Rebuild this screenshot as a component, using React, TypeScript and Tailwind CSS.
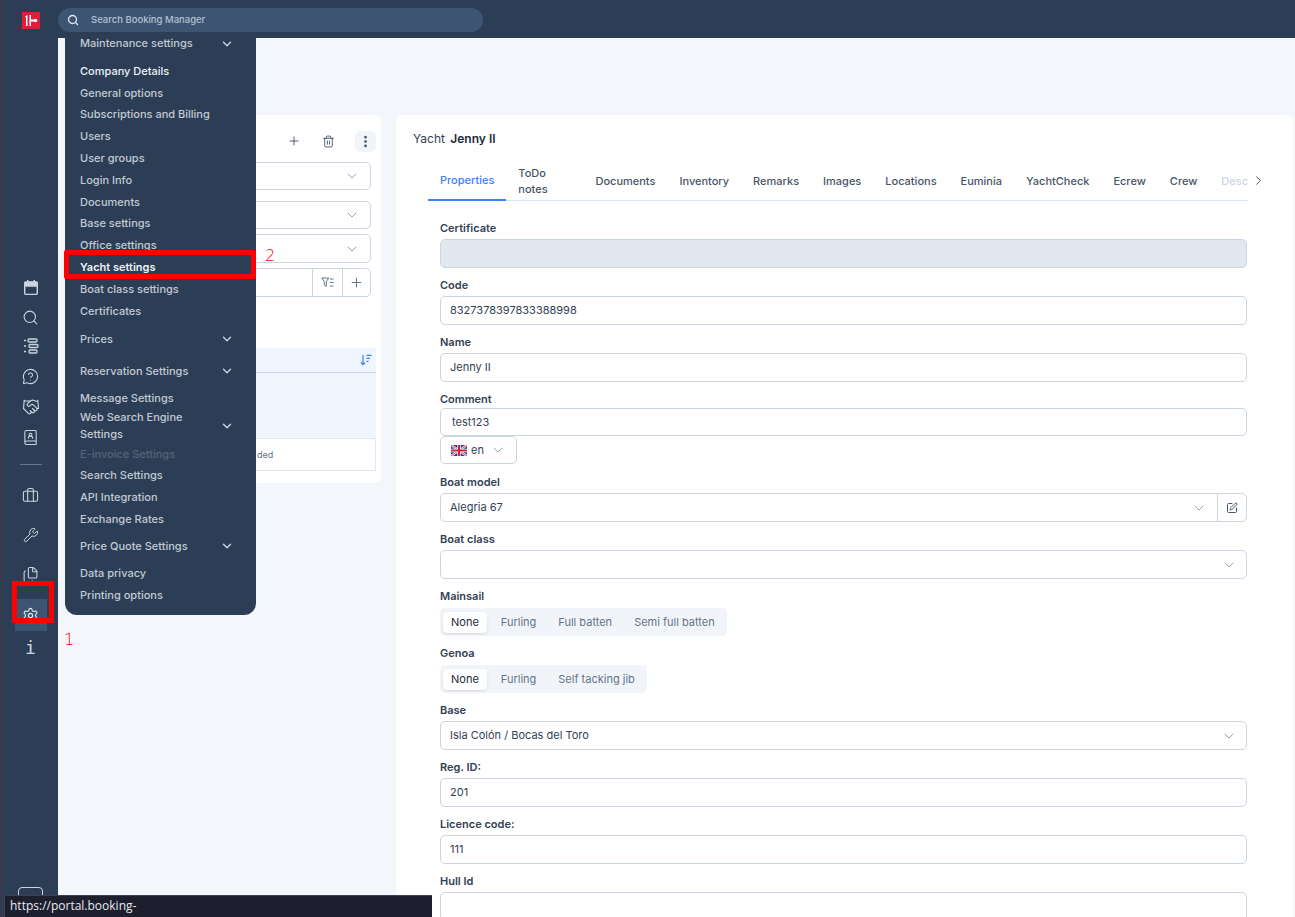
import React from "react";
import { Search, ChevronDown, ChevronRight, Plus, Trash2, EllipsisVertical, MessageCircleQuestion, Handshake, BookUser, Briefcase, Wrench, Files, Settings, SquarePen } from "lucide-react";

const F = "[font-family:Inter,'Liberation_Sans',sans-serif]";

function Chevron({ className = "" }: { className?: string }) {
  return <ChevronDown size={16} strokeWidth={1.5} className={`text-[#94a3b8] ${className}`} />;
}

function Label({ children, tight }: { children: React.ReactNode; tight?: boolean }) {
  return <div className={`h-4 text-[11px] leading-4 font-semibold text-[#334155] ${tight ? "mb-[1px]" : "mb-[3px]"}`}>{children}</div>;
}

function Input({ value, disabled, select, h = "h-[29px]", px = "px-[9px]" }: { value?: string; disabled?: boolean; select?: boolean; h?: string; px?: string }) {
  return (
    <div className={`${h} ${px} flex items-center justify-between rounded-[5px] border border-[#cbd5e1] text-[11px] text-[#334155] ${disabled ? "bg-[#e2e8f0]" : "bg-white"}`}>
      <span>{value}</span>
      {select && <Chevron />}
    </div>
  );
}

function Field({ label, value, disabled, select }: { label: string; value?: string; disabled?: boolean; select?: boolean }) {
  return (
    <div className="mb-[9px]">
      <Label>{label}</Label>
      <Input value={value} disabled={disabled} select={select} />
    </div>
  );
}

function Segments({ label, items }: { label: string; items: string[] }) {
  return (
    <div className="mb-[9px]">
      <Label>{label}</Label>
      <div className="flex w-fit h-[28px] mt-[4px] items-center rounded-[5px] bg-[#f1f5f9] px-[3px]">
        {items.map((t, i) => (
          <span key={t} className={`h-[21px] px-[8px] mr-[6px] last:mr-[1px] flex items-center rounded-[4px] text-[11px] ${i === 0 ? "bg-white text-[#1e293b] shadow-sm" : "text-[#64748b]"}`}>{t}</span>
        ))}
      </div>
    </div>
  );
}

function CalendarIcon() {
  return (
    <svg width="16" height="17" viewBox="0 0 16 17" fill="none" stroke="#cbd5e1" strokeWidth="1.4">
      <rect x="1.7" y="3" width="12.6" height="12.4" rx="1.5" />
      <path d="M2 3.5h12V7H2z" fill="#cbd5e1" />
      <path d="M4.7 1v2.5M11.3 1v2.5" />
    </svg>
  );
}

function ListIcon() {
  return (
    <svg width="16" height="16" viewBox="0 0 16 16" fill="none" stroke="#cbd5e1" strokeWidth="1.3">
      <path d="M1 2.5h2M1 8h2M1 13.5h2" strokeWidth="1.6" />
      <rect x="5" y="1" width="9" height="3" rx="1" />
      <rect x="6" y="6.5" width="9" height="3" rx="1" />
      <rect x="6" y="12" width="8" height="3" rx="1" />
    </svg>
  );
}

function Logo() {
  return (
    <svg width="18" height="17" viewBox="0 0 18 17">
      <rect width="18" height="17" fill="#e11d38" />
      <path d="M3 4.5 5.5 3v11H4V5.5zM7.5 3H9v11H7.5z" fill="#fff" />
      <path d="M9 7.5h3.5v2H9z" fill="#fff" />
      <circle cx="13.5" cy="8.5" r="1.8" fill="#fff" />
    </svg>
  );
}

function FilterIcon() {
  return (
    <svg width="13" height="11" viewBox="0 0 13 11" fill="none" stroke="#64748b" strokeWidth="1">
      <path d="M.7 1h7L5.3 4.5V9.5L3.3 8V4.5z" />
      <path d="M9 2h3.5M9 5.5h3.5M9 9h3.5" />
    </svg>
  );
}

function SortIcon() {
  return (
    <svg width="12" height="12" viewBox="0 0 12 12" fill="none" stroke="#3b82f6" strokeWidth="1.2">
      <path d="M3 1v9.5M1 8.5l2 2.2 2-2.2M6.5 1.3h5M6.5 4.3h3.5M6.5 7.3h2" />
    </svg>
  );
}

function UkFlag() {
  return (
    <svg width="16" height="11" viewBox="0 0 16 11">
      <rect width="16" height="11" fill="#27408b" />
      <path d="M0 0l16 11M16 0L0 11" stroke="#fff" strokeWidth="2.2" />
      <path d="M0 0l16 11M16 0L0 11" stroke="#d5213f" strokeWidth="0.8" />
      <path d="M8 0v11M0 5.5h16" stroke="#fff" strokeWidth="3.4" />
      <path d="M8 0v11M0 5.5h16" stroke="#d5213f" strokeWidth="2" />
    </svg>
  );
}

function Menu() {
  const Item = ({ t, h = "h-[21.8px]", cls = "text-[#c3c9d3]" }: { t: string; h?: string; cls?: string }) => (
    <div className={`${h} flex items-center text-[11px] font-medium ${cls}`}>{t}</div>
  );
  const Group = ({ t, h = "h-[31px]" }: { t: string; h?: string }) => (
    <div className={`${h} flex items-center justify-between pr-[22px] text-[11px] font-medium text-[#c3c9d3]`}>
      <span>{t}</span>
      <ChevronDown size={14} strokeWidth={2.4} className="text-[#cbd5e1] shrink-0" />
    </div>
  );
  return (
    <div className="absolute left-[65px] top-[32px] w-[191px] h-[583px] rounded-b-[12px] bg-[#2c3e56] pl-[15px] pt-[1px] z-20">
      <Group t="Maintenance settings" h="h-[21px]" />
      <div className="h-[6px]" />
      <Item t="Company Details" h="h-[22px]" cls="text-[#eef2f6]" />
      <Item t="General options" />
      <Item t="Subscriptions and Billing" />
      <Item t="Users" />
      <Item t="User groups" />
      <Item t="Login Info" />
      <Item t="Documents" />
      <Item t="Base settings" />
      <Item t="Office settings" />
      <Item t="Yacht settings" cls="text-[#eef2f6] font-semibold" />
      <Item t="Boat class settings" />
      <Item t="Certificates" />
      <div className="h-[1px]" />
      <Group t="Prices" h="h-[32px]" />
      <Group t="Reservation Settings" h="h-[32px]" />
      <Item t="Message Settings" h="h-[22px]" />
      <div className="h-[1px]" />
      <Group t="Web Search Engine Settings" h="h-[32px]" />
      <div className="h-[1px]" />
      <Item t="E-invoice Settings" h="h-[22px]" cls="text-[#556479]" />
      <Item t="Search Settings" />
      <Item t="API Integration" />
      <Item t="Exchange Rates" />
      <Group t="Price Quote Settings" h="h-[32px]" />
      <Item t="Data privacy" h="h-[22px]" />
      <Item t="Printing options" />
    </div>
  );
}

function Sidebar() {
  const cls = "text-[#cbd5e1]";
  return (
    <aside className="w-[55px] shrink-0 bg-[#2c3e56] flex flex-col items-center pt-[12px] relative">
      <Logo />
      <div className="mt-[243px] flex flex-col items-center w-full">
        <div className="h-[30px] flex items-center"><CalendarIcon /></div>
        <div className="h-[30px] flex items-center"><Search size={17} strokeWidth={1.5} className={cls} /></div>
        <div className="h-[28px] flex items-center"><ListIcon /></div>
        <div className="h-[32px] flex items-center"><MessageCircleQuestion size={17} strokeWidth={1.5} className={cls} /></div>
        <div className="h-[29px] flex items-center"><Handshake size={18} strokeWidth={1.5} className={cls} /></div>
        <div className="h-[32px] flex items-center"><BookUser size={17} strokeWidth={1.5} className={cls} /></div>
        <div className="w-[22px] h-px bg-[#64748b] mt-[11px] mb-[11px]" />
        <div className="h-[38px] flex items-center"><Briefcase size={17} strokeWidth={1.5} className={cls} /></div>
        <div className="h-[42px] flex items-center"><Wrench size={16} strokeWidth={1.5} className={cls} /></div>
        <div className="h-[37px] flex items-center"><Files size={17} strokeWidth={1.5} className={cls} /></div>
        <div className="w-[32px] h-[32px] mt-[6px] flex items-center justify-center bg-[#3d5473]"><Settings size={17} strokeWidth={1.6} className="text-[#e2e8f0]" /></div>
        <div className="h-[32px] flex items-center text-[18px] [font-family:'DejaVu_Sans_Mono',monospace] text-[#cbd5e1]">i</div>
      </div>
      <div className="absolute left-[15px] top-[887px] w-[25px] h-[30px] rounded-[4px] border border-[#cbd5e1]" />
    </aside>
  );
}

function LeftCard() {
  const Box = ({ h, mb, chev }: { h: string; mb: string; chev?: boolean }) => (
    <div className={`${h} ${mb} rounded-[5px] border border-[#cbd5e1] bg-white flex items-center justify-end pr-[10px]`}>{chev && <Chevron />}</div>
  );
  return (
    <div className="w-[311px] h-[368px] bg-white rounded-[6px] px-[5px] pt-[14px] shrink-0">
      <div className="h-[24px] flex items-center justify-end text-[#334155] mb-[9px] mr-0">
        <Plus size={14} strokeWidth={1.4} className="mr-[21px]" />
        <Trash2 size={13} strokeWidth={1.5} className="mr-[20px]" />
        <div className="w-[21px] h-[21px] rounded-[5px] bg-[#f1f5f9] flex items-center justify-center"><EllipsisVertical size={15} strokeWidth={2.4} className="text-[#475569]" /></div>
      </div>
      <div className="pr-[5px]">
        <Box h="h-[28px]" mb="mb-[11px]" chev />
        <Box h="h-[28px]" mb="mb-[5px]" chev />
        <Box h="h-[29px]" mb="mb-[5px]" chev />
        <div className="h-[29px] rounded-[5px] border border-[#cbd5e1] bg-white flex justify-end">
          <div className="w-[30px] border-l border-[#cbd5e1] flex items-center justify-center"><FilterIcon /></div>
          <div className="w-[28px] border-l border-[#cbd5e1] flex items-center justify-center"><Plus size={15} strokeWidth={1.3} className="text-[#475569]" /></div>
        </div>
      </div>
      <div className="mt-[51px] h-[25px] bg-[#eff6ff] border-b border-[#cbd5e1] flex items-center justify-end pr-[4px]"><SortIcon /></div>
      <div className="h-[65px] bg-[#eff6ff]" />
      <div className="h-[33px] border border-[#e2e8f0] flex items-center text-[9px] text-[#64748b] pl-[181px]">ded</div>
    </div>
  );
}

function RightCard() {
  const tabs = ["ToDo notes", "Documents", "Inventory", "Remarks", "Images", "Locations", "Euminia", "YachtCheck", "Ecrew", "Crew"];
  return (
    <div className="flex-1 h-[802px] bg-white rounded-t-[6px] pl-[17px] pr-[46px] overflow-hidden">
      <div className="pt-[16px] h-[47px] text-[12px] text-[#334155] leading-4">Yacht <span className="ml-[2px] font-semibold text-[#1e293b]">Jenny II</span></div>
      <div className="ml-[15px] mr-[-1px] flex h-[39px] items-stretch border-b border-[#dbe6f3] relative text-[11px] font-medium text-[#475569]">
        <div className="px-[12px] flex items-center text-[#3b82f6] border-b-2 border-[#3b82f6] -mb-px">Properties</div>
        {tabs.map((t) => <div key={t} className="px-[12px] flex items-center">{t}</div>)}
        <div className="pl-[12px] flex items-center w-[42px] overflow-hidden text-[#cbd5e1]">Description</div>
        <ChevronRight size={15} strokeWidth={1.6} className="absolute -right-[18px] top-[11px] text-[#475569]" />
      </div>
      <div className="ml-[27px] mt-[19px]">
        <Field label="Certificate" disabled />
        <Field label="Code" value="8327378397833388998" />
        <Field label="Name" value="Jenny II" />
        <Label tight>Comment</Label>
        <Input value="test123" h="h-[28px]" px="px-[11px]" />
        <div className="h-[28px] w-[77px] mb-[10px] rounded-[5px] border border-[#cbd5e1] flex items-center pl-[10px] pr-[10px] text-[11px] text-[#334155]">
          <UkFlag /><span className="ml-[4px] flex-1">en</span><Chevron />
        </div>
        <div className="mb-[9px]">
          <Label>Boat model</Label>
          <div className="h-[29px] flex rounded-[5px] border border-[#cbd5e1] text-[11px] text-[#334155]">
            <div className="flex-1 flex items-center justify-between px-[9px] pr-[10px]"><span>Alegria 67</span><Chevron /></div>
            <div className="w-[29px] border-l border-[#cbd5e1] flex items-center justify-center"><SquarePen size={12} strokeWidth={2} className="text-[#475569]" /></div>
          </div>
        </div>
        <Field label="Boat class" select />
        <Segments label="Mainsail" items={["None", "Furling", "Full batten", "Semi full batten"]} />
        <Segments label="Genoa" items={["None", "Furling", "Self tacking jib"]} />
        <Field label="Base" value="Isla Colón / Bocas del Toro" select />
        <Field label="Reg. ID:" value="201" />
        <Field label="Licence code:" value="111" />
        <Field label="Hull Id" />
      </div>
    </div>
  );
}

export default function App() {
  return (
    <div className={`${F} relative w-[1295px] h-[917px] overflow-hidden bg-[#f3f6fa] flex`}>
      <div className="w-[3px] shrink-0 bg-[#363a4c]" />
      <Sidebar />
      <div className="flex-1 min-w-0 flex flex-col">
        <header className="h-[38px] shrink-0 bg-[#2c3e56] flex items-start pt-[8px]">
          <div className="w-[425px] h-[24px] rounded-full bg-[#3d5473] flex items-center pl-[9px] text-[#b4c0cf]">
            <Search size={12} strokeWidth={2.6} className="text-[#e2e8f0]" />
            <span className="ml-[12px] text-[9.5px] font-medium">Search Booking Manager</span>
          </div>
        </header>
        <main className="flex-1 flex items-start pl-[12px] pt-[77px] pr-[2px] gap-[15px]">
          <LeftCard />
          <RightCard />
        </main>
      </div>
      <Menu />
      <div className="absolute left-[12px] top-[581px] w-[42px] h-[42px] border-[5px] border-[#ff0000] z-30" />
      <div className="absolute left-[64px] top-[250px] w-[192px] h-[29px] border-[5px] border-[#ff0000] rounded-[2px] z-30" />
      <span className="absolute left-[64px] top-[631px] text-[16px] leading-[18px] text-[#ff0000] [font-family:'DejaVu_Sans',sans-serif] font-light z-30">1</span>
      <span className="absolute left-[265px] top-[247px] text-[16px] leading-[18px] text-[#ff0000] [font-family:'DejaVu_Sans',sans-serif] font-light z-30">2</span>
      <div className="absolute left-[4px] bottom-0 h-[22px] w-[428px] bg-[#1d1e2e] border-t border-l border-[#3f4152] text-[#e8eaf0] text-[12px] leading-[20px] pl-[5px] z-40 [font-family:'Open_Sans',sans-serif]">https://portal.booking-manager.com/wbm2/app/my_account/yachtSettings.jsp</div>
    </div>
  );
}
